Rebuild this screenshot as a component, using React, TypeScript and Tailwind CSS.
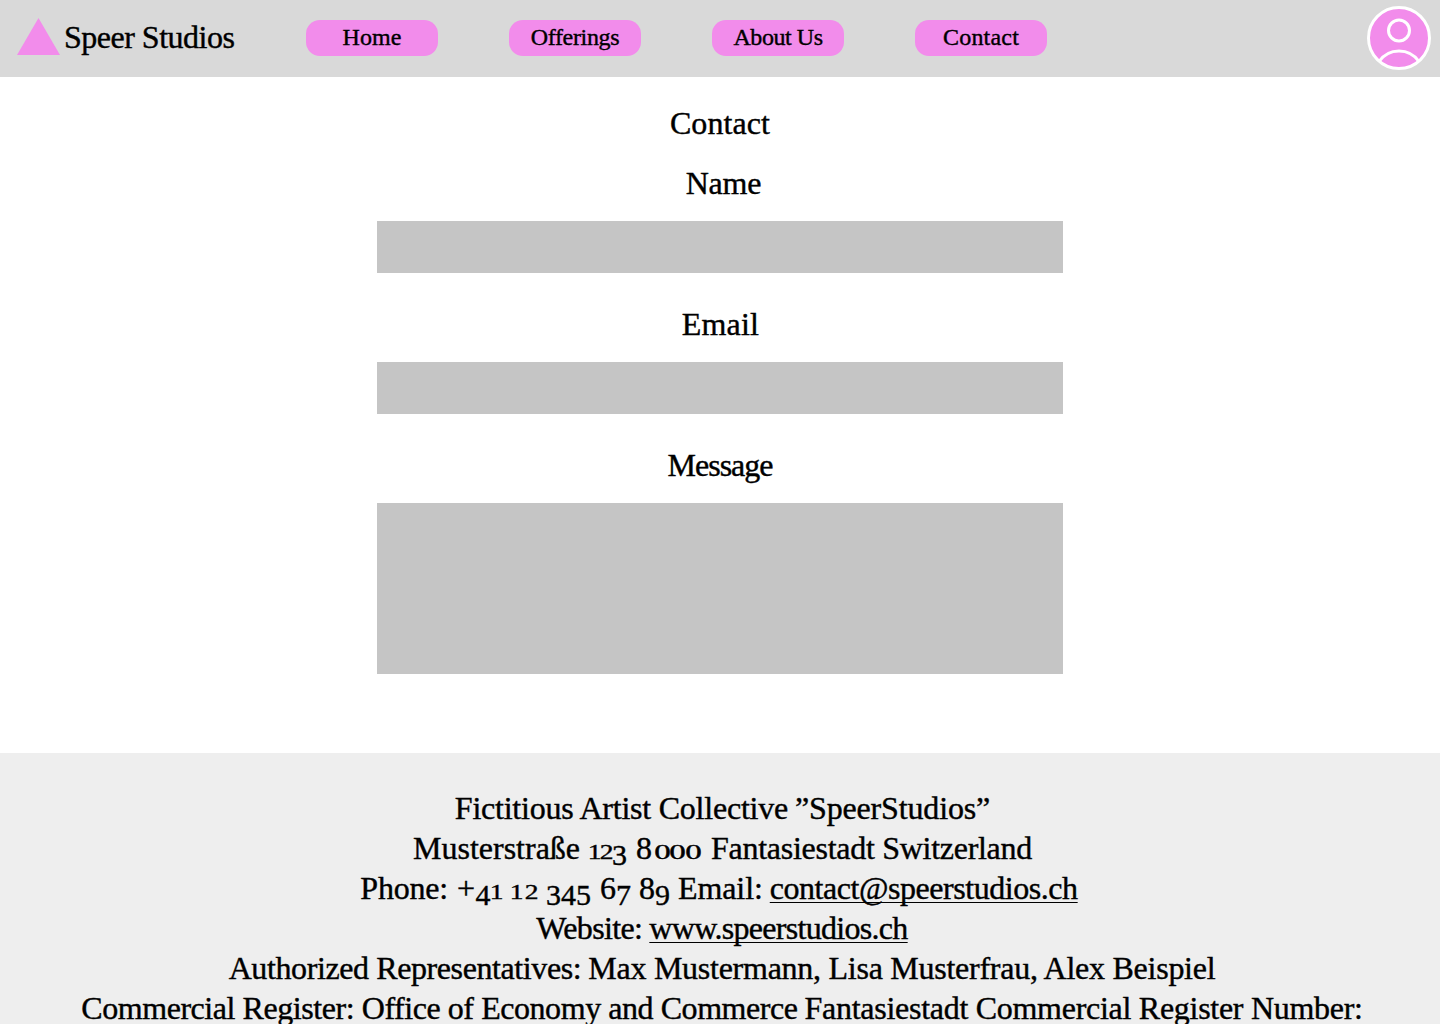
import type { ReactNode } from "react";

const navItems = [
  { label: "Home", spacing: "tracking-[0.1px]" },
  { label: "Offerings", spacing: "tracking-[-0.33px]" },
  { label: "About Us", spacing: "tracking-[-0.45px]" },
  { label: "Contact", spacing: "tracking-[0.2px]" },
];

const fields = [
  { label: "Name", spacing: "tracking-[-0.2px] pl-[7px]", box: "h-[52px] mb-[31px]" },
  { label: "Email", spacing: "tracking-[0.2px] pl-px", box: "h-[52px] mb-[31px]" },
  { label: "Message", spacing: "tracking-[-1px]", box: "h-[171px]" },
];

/* Old-style figures: 0-2 at x-height, 3/4/5/7/9 descending, 6/8 full height. */
function Digit({ d }: { d: string }) {
  if (d === "0") return <span className="inline-block scale-x-150 text-[22px]">{d}</span>;
  if (d === "1") return <span className="inline-block scale-x-125 text-[22px]">{d}</span>;
  if (d === "2") return <span className="inline-block scale-x-125 text-[22px]">{d}</span>;
  if ("34579".includes(d)) return <span className="relative top-[6px] text-[30px]">{d}</span>;
  return <span>{d}</span>;
}

function Figures({ value, className }: { value: string; className: string }) {
  return (
    <span className={`flex h-10 items-baseline justify-between ${className}`}>
      {value.split("").map((d, i) => (
        <Digit key={i} d={d} />
      ))}
    </span>
  );
}

function Line({ children, className = "" }: { children: ReactNode; className?: string }) {
  return <div className={`flex h-10 items-baseline justify-center whitespace-nowrap ${className}`}>{children}</div>;
}

const link = "underline decoration-1 underline-offset-[3px] [text-decoration-skip-ink:none]";

export default function App() {
  return (
    <div className="h-[1024px] overflow-hidden bg-white font-['Liberation_Serif',serif] text-[32px] leading-10 text-black [-webkit-text-stroke:0.4px_black]">
      <header className="flex h-[77px] items-center bg-[#d9d9d9] pr-[9px] pl-[17px]">
        <div className="flex w-[289px] items-center">
          <svg className="-mt-1 h-[37px] w-[43px]" viewBox="0 0 43 37">
            <path d="M21.5 0 43 37H0Z" fill="#f28ceb" />
          </svg>
          <span className="-mt-[3px] ml-[4px] tracking-[-0.5px] whitespace-nowrap">Speer Studios</span>
        </div>
        <nav className="flex gap-[71px]">
          {navItems.map((n) => (
            <a
              key={n.label}
              className={`-mt-px h-9 w-[132px] rounded-[14px] bg-[#f28ceb] text-center text-2xl leading-[35px] ${n.spacing}`}
            >
              {n.label}
            </a>
          ))}
        </nav>
        <svg className="-mt-px ml-auto size-16" viewBox="0 0 64 64" fill="none" stroke="#fff" strokeWidth="3">
          <circle cx="32" cy="32" r="30.5" fill="#f28ceb" />
          <circle cx="32" cy="24.5" r="10.5" />
          <path d="M12 55.5C22 41.5 42 41.5 52 55.5" />
        </svg>
      </header>

      <main className="flex h-[676px] flex-col items-center pt-[26px]">
        <h1 className="mb-5 tracking-[0.1px]">Contact</h1>
        {fields.map((f) => (
          <label key={f.label} className="flex flex-col items-center">
            <span className={`mb-[18px] ${f.spacing}`}>{f.label}</span>
            <span className={`w-[686px] bg-[#c5c5c5] ${f.box}`} />
          </label>
        ))}
      </main>

      <footer className="h-[271px] bg-[#eeeeee] pt-[35px] pl-[4px]">
        <Line className="gap-[7px] pl-px">
          <span className="tracking-[-0.23px]">Fictitious Artist Collective</span>
          <span className="tracking-[-0.15px]">”SpeerStudios”</span>
        </Line>
        <Line className="gap-[9px] pl-px">
          <span>Musterstraße</span>
          <Figures value="123" className="w-[38px]" />
          <Figures value="8000" className="mr-[3px] w-[63px]" />
          <span className="tracking-[-0.28px]">Fantasiestadt Switzerland</span>
        </Line>
        <Line className="gap-[9px] pr-[6px]">
          <span className="tracking-[-0.2px]">Phone:</span>
          <Figures value="+41" className="w-[45px]" />
          <Figures value="12" className="w-[26px]" />
          <Figures value="345" className="mr-[3px] w-[42px]" />
          <Figures value="67" className="w-[30px]" />
          <Figures value="89" className="w-[30px]" />
          <span className="tracking-[-0.1px]">Email:</span>
          <a className={`-ml-[2px] tracking-[-0.45px] ${link}`}>contact@speerstudios.ch</a>
        </Line>
        <Line className="gap-[7px]">
          <span className="tracking-[-0.65px]">Website:</span>
          <a className={`tracking-[-0.7px] ${link}`}>www.speerstudios.ch</a>
        </Line>
        <Line className="gap-[7px]">
          <span className="tracking-[-0.4px]">Authorized Representatives:</span>
          <span className="tracking-[-0.26px]">Max Mustermann, Lisa Musterfrau, Alex Beispiel</span>
        </Line>
        <Line className="gap-[7px]">
          <span className="tracking-[-0.44px]">Commercial Register: Office of Economy and Commerce</span>
          <span className="tracking-[-0.28px]">Fantasiestadt Commercial Register Number:</span>
        </Line>
      </footer>
    </div>
  );
}
